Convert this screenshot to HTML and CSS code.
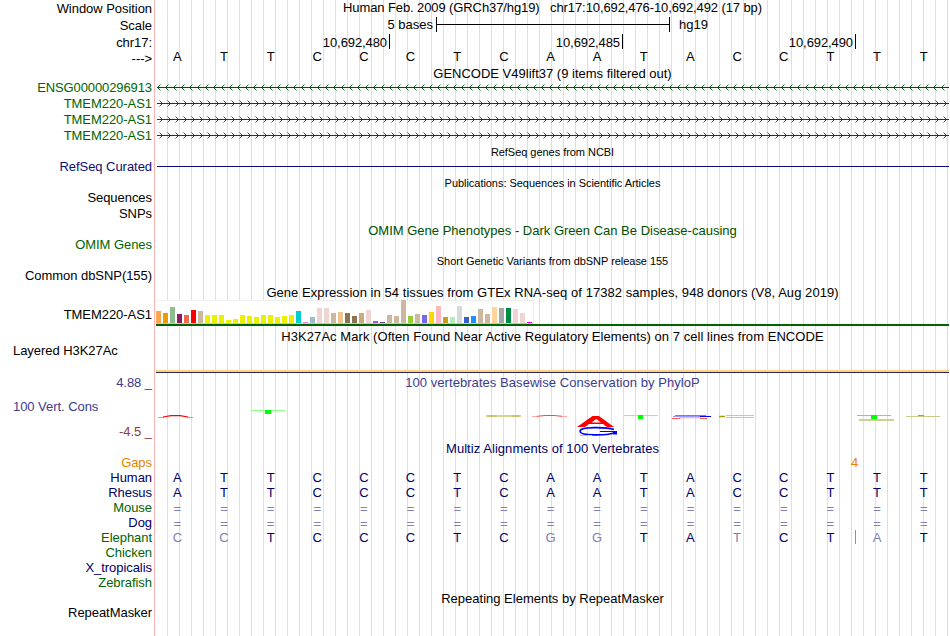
FILE: index.html
```html
<!DOCTYPE html>
<html lang="en">
<head>
  <meta charset="UTF-8">
  <title>Genome Browser - hg19 chr17:10,692,476-10,692,492</title>
  <link rel="stylesheet" href="styles.css">
</head>
<body>

<div class="browser">
  <div class="row h17"><div class="label">Window Position</div><div class="title up narrow">Human Feb. 2009 (GRCh37/hg19)&nbsp;&nbsp; chr17:10,692,476-10,692,492 (17 bp)</div></div>
  <div class="row h17">
    <div class="label">Scale</div>
    <div class="track scale up"><span class="scale-left">5 bases</span><div class="scale-bar"></div><span>hg19</span></div>
  </div>
  <div class="row h16">
    <div class="label">chr17:</div>
    <div class="track ruler"><span class="tick first">10,692,480</span><span class="tick">10,692,485</span><span class="tick">10,692,490</span></div>
  </div>
  <div class="row h16"><div class="label">---&gt;</div><div class="track bases black" data-seq="ATTCCCTCAATACCTTT"></div></div>

  <div class="row h14"><div class="label"></div><div class="title">GENCODE V49lift37 (9 items filtered out)</div></div>
  <div class="row h16 green"><div class="label up narrow">ENSG00000296913</div><svg class="gene" data-dir="-" width="793" height="16"></svg></div>
  <div class="row h16 green"><div class="label up">TMEM220-AS1</div><svg class="gene" data-dir="+" width="793" height="16"></svg></div>
  <div class="row h16 green"><div class="label up">TMEM220-AS1</div><svg class="gene" data-dir="+" width="793" height="16"></svg></div>
  <div class="row h16 green"><div class="label up">TMEM220-AS1</div><svg class="gene" data-dir="+" width="793" height="16"></svg></div>

  <div class="row h15"><div class="label"></div><div class="title small down">RefSeq genes from NCBI</div></div>
  <div class="row h15 navy"><div class="label">RefSeq Curated</div><div class="track"><div class="refseq-line"></div></div></div>
  <div class="row h16"><div class="label"></div><div class="title small down">Publications: Sequences in Scientific Articles</div></div>
  <div class="row h16"><div class="label up">Sequences</div></div>
  <div class="row h16"><div class="label up">SNPs</div></div>
  <div class="row h15 darkgreen"><div class="label"></div><div class="title down">OMIM Gene Phenotypes - Dark Green Can Be Disease-causing</div></div>
  <div class="row h16 green"><div class="label up">OMIM Genes</div></div>
  <div class="row h15"><div class="label"></div><div class="title small down">Short Genetic Variants from dbSNP release 155</div></div>
  <div class="row h16"><div class="label up">Common dbSNP(155)</div></div>

  <div class="row h16"><div class="label"></div><div class="title wide">Gene Expression in 54 tissues from GTEx RNA-seq of 17382 samples, 948 donors (V8, Aug 2019)</div></div>
  <div class="row h28">
    <div class="label">TMEM220-AS1</div>
    <div class="track gtex"><div class="gtex-bars" id="gtex"></div><div class="gtex-gene"></div></div>
  </div>

  <div class="row h15"><div class="label"></div><div class="title down wide">H3K27Ac Mark (Often Found Near Active Regulatory Elements) on 7 cell lines from ENCODE</div></div>
  <div class="row h32 top"><div class="label left">Layered H3K27Ac</div><div class="track layered"></div></div>

  <div class="row h15 cons"><div class="label">4.88 _</div><div class="title wide">100 vertebrates Basewise Conservation by PhyloP</div></div>
  <div class="row h50 top cons">
    <div class="label stack"><span class="cons-name">100 Vert. Cons</span><span class="cons-min">-4.5 _</span></div>
    <svg width="793" height="50" viewBox="156 390 793 50" fill="none">
      <path d="M158 417.5H164M187 417.5H193" stroke="#f88"/><path d="M163 417L171 415.7H180L188 417" stroke="#f00" stroke-width="1.2"/>
      <path d="M251 410.5H285" stroke="#8f8"/><path d="M265 410h6v4h-6z" fill="#0f0"/>
      <path d="M486 416H521" stroke="#d4d490" stroke-width="2"/><path d="M488 416H496M512 416H519" stroke="#b8b850"/>
      <path d="M532 416.5H538M561 416.5H567" stroke="#faa"/><path d="M537 416.3L545 415.5H554L562 416.3" stroke="#f44"/>
      <path d="M577 427L592.5 416H599L614 427H607L603 424H589L585 427ZM591.5 422.5H601L596.3 419Z" fill="#f00" fill-rule="evenodd"/>
      <path d="M614 429.4C606 427 580 426.5 580 431.2C580 436 606 435.5 614 433" stroke="#00f" stroke-width="1.6"/>
      <path d="M600 431.5H616" stroke="#00f"/><path d="M613 431h4v3.5h-4z" fill="#00f"/>
      <path d="M580 435.5H592" stroke="#cc9"/>
      <path d="M624 415.5H658" stroke="#8f8"/><path d="M638 415h5v4h-5z" fill="#0f0"/>
      <path d="M675 415.5H706" stroke="#77f"/><path d="M673 416.5H700" stroke="#99f"/><path d="M700 416.5H711" stroke="#00f"/>
      <path d="M672 418.5H680M700 418.5H707" stroke="#f55"/><path d="M679 417.8H701" stroke="#f99"/>
      <path d="M754 415.5H726M726 417.5H754" stroke="#cc8"/><path d="M719 416.5H725" stroke="#a0a000" stroke-width="1.5"/>
      <path d="M857 415.5H891" stroke="#4f4"/><path d="M871 415h6v4h-6z" fill="#0f0"/><path d="M859 420H894" stroke="#d0d090" stroke-width="2"/>
      <path d="M906 416.5H940" stroke="#cc8"/><path d="M918 415h6v1h-6z" fill="#0f0"/>
    </svg>
  </div>

  <div class="row h15 blue"><div class="label"></div><div class="title down wide">Multiz Alignments of 100 Vertebrates</div></div>
  <div class="row h15 orange"><div class="label">Gaps</div><div class="track gaps"><span>4</span></div></div>
  <div class="row h15 blue"><div class="label">Human</div><div class="track bases" data-seq="ATTCCCTCAATACCTTT"></div></div>
  <div class="row h15 blue"><div class="label">Rhesus</div><div class="track bases" data-seq="ATTCCCTCAATACCTTT"></div></div>
  <div class="row h15 green"><div class="label">Mouse</div><div class="track bases down" data-seq="================="></div></div>
  <div class="row h15 blue"><div class="label">Dog</div><div class="track bases down" data-seq="================="></div></div>
  <div class="row h15 green"><div class="label">Elephant</div><div class="track bases" data-seq="ccTCCCTCggTAtCTaT"><i class="insert"></i></div></div>
  <div class="row h15 green"><div class="label">Chicken</div></div>
  <div class="row h15 blue"><div class="label">X_tropicalis</div></div>
  <div class="row h15 green"><div class="label">Zebrafish</div></div>

  <div class="row h15"><div class="label"></div><div class="title down">Repeating Elements by RepeatMasker</div></div>
  <div class="row h15"><div class="label">RepeatMasker</div></div>
</div>

<script>
  // one cell per base, lower case = differs from human
  document.querySelectorAll('.bases').forEach(track => {
    [...track.dataset.seq].forEach(base => {
      const cell = document.createElement('span');
      cell.textContent = base.toUpperCase();
      if (base === '=' || base !== base.toUpperCase()) cell.className = 'diff';
      track.appendChild(cell);
    });
  });

  // gene line with strand arrows every 8px
  document.querySelectorAll('.gene').forEach(svg => {
    const forward = svg.dataset.dir === '+';
    let arrows = '';
    for (let x = 0; x < 793; x += 8) {
      arrows += forward ? `M${x + 3.5} 4.5l3 3l-3 3` : `M${x + 4.5} 4.5l-3 3l3 3`;
    }
    svg.innerHTML = `<path class="gene-line" d="M1 7.5H793"/><path class="gene-arrows" d="${arrows}"/>`;
  });

  // [color, height] for each tissue
  const tissues = [
    ['#ffa54f', 12], ['#ee9a00', 10], ['#8fbc8f', 16], ['#8b1c62', 9], ['#ee6a50', 8], ['#ff0000', 13],
    ['#cdb79e', 12], ['#eeee00', 8], ['#eeee00', 8], ['#eeee00', 8], ['#eeee00', 3], ['#eeee00', 4],
    ['#eeee00', 8], ['#eeee00', 7], ['#eeee00', 6], ['#eeee00', 8], ['#eeee00', 8], ['#eeee00', 6],
    ['#eeee00', 7], ['#eeee00', 8], ['#00cdcd', 12], ['#ee82ee', 1], ['#9ac0cd', 6], ['#eed5d2', 15],
    ['#eed5d2', 15], ['#cdb79e', 10], ['#eec591', 11], ['#8b7355', 10], ['#8b7355', 7], ['#cdaa7d', 10],
    ['#eed5d2', 13], ['#b452cd', 2], ['#7a378b', 1], ['#cdb79e', 8], ['#cdb79e', 7], ['#cdb79e', 23],
    ['#9acd32', 7], ['#cdb79e', 9], ['#7a67ee', 8], ['#ffd700', 11], ['#ffb6c1', 17], ['#cd9b1d', 6],
    ['#b4eeb4', 6], ['#d9d9d9', 17], ['#3a5fcd', 6], ['#1e90ff', 7], ['#cdb79e', 14], ['#cdb79e', 9],
    ['#ffd39b', 16], ['#a6a6a6', 15], ['#008b45', 15], ['#eed5d2', 14], ['#eed5d2', 10], ['#ff00ff', 1]
  ];
  document.getElementById('gtex').innerHTML = tissues
    .map(([color, height]) => `<b style="background:${color};height:${height}px"></b>`).join('');
</script>

</body>
</html>
```
FILE: styles.css
```css
body { margin: 0; background: #fff; color: #000; font-family: "Liberation Sans", Arial, sans-serif; font-size: 13px; }
.browser {
  width: 949px; height: 636px; overflow: hidden;
  background:
    linear-gradient(#ffb4b4, #ffb4b4) 154px 0 / 1px 100% no-repeat,
    repeating-linear-gradient(to right, transparent 0 11px, #dcdcf5 11px 12px) 156px 0 no-repeat;
}
.row { display: grid; grid-template-columns: 153px 793px; grid-template-rows: 100%; column-gap: 3px; align-items: center; line-height: 15px; white-space: nowrap; }
.row.top { align-items: start; }
.h14 { height: 14px; }
.h15 { height: 15px; }
.h16 { height: 16px; }
.h17 { height: 17px; }
.h28 { height: 28px; }
.h32 { height: 32px; }
.h50 { height: 50px; }
.label { text-align: right; padding-right: 1px; letter-spacing: -.05px; }
.label.left { text-align: left; padding-left: 13px; }
.title { text-align: center; }
.small { font-size: 11px; }
.title.small { letter-spacing: -.04px; }
.up { padding-bottom: 2px; }
.down { padding-top: 2px; }
.narrow { letter-spacing: -.1px; }
.wide { letter-spacing: .055px; }
svg { display: block; }

.green { color: #006400; }
.darkgreen { color: #005000; }
.navy { color: #0c0c78; }
.blue { color: #000064; }
.orange { color: #e68200; }
.cons { color: #3c3c8c; }

/* ruler */
.scale { display: flex; align-items: center; }
.scale-left { width: 277px; text-align: right; padding-right: 3px; }
.scale-bar {
  width: 234px; height: 15px; margin-right: 9px; box-sizing: border-box; border: solid #000; border-width: 0 1px;
  background: linear-gradient(#000, #000) 0 7px / 100% 1px no-repeat;
}
.ruler { display: flex; align-self: start; height: 15px; line-height: 17px; letter-spacing: -.09px; }
.tick { box-sizing: border-box; width: 233px; padding-right: 2px; text-align: right; border-right: 1px solid #000; }
.tick.first { width: 234px; }
.bases { position: relative; display: grid; grid-template-columns: repeat(17, 1fr); margin-left: -2px; width: 793px; text-align: center; color: #000064; }
.bases.black { color: #000; padding-bottom: 3px; }
.diff { color: #8080b4; }
.insert { position: absolute; left: 701px; top: 0; width: 1px; height: 14px; background: #e68200; }
.gaps { padding-left: 695px; }

/* genes */
.gene-line { stroke: #005000; }
.gene-arrows { stroke: #005000; stroke-width: .85; fill: none; }
.refseq-line { height: 1px; margin-left: 1px; background: #0c0c78; }

/* gtex */
.gtex { height: 28px; }
.gtex-bars {
  display: flex; align-items: flex-end; gap: 2px; box-sizing: border-box; width: 378px; height: 24px;
  background: #fff; border: solid #eee; border-width: 1px 1px 0 0; box-shadow: inset 0 -1px #c8c8c8; padding-bottom: 1px;
}
.gtex-bars b { width: 5px; flex: none; }
.gtex-gene { height: 2px; background: #006400; }

/* signal */
.layered { height: 29px; border-bottom: 1px solid #28285a; background: linear-gradient(#ffd080, #ffd080) 0 100% / 100% 2px no-repeat; }
.stack { display: flex; flex-direction: column; }
.cons-name { text-align: left; padding: 9px 0 10px 13px; }
.cons-min { color: #8c3c3c; }
```
